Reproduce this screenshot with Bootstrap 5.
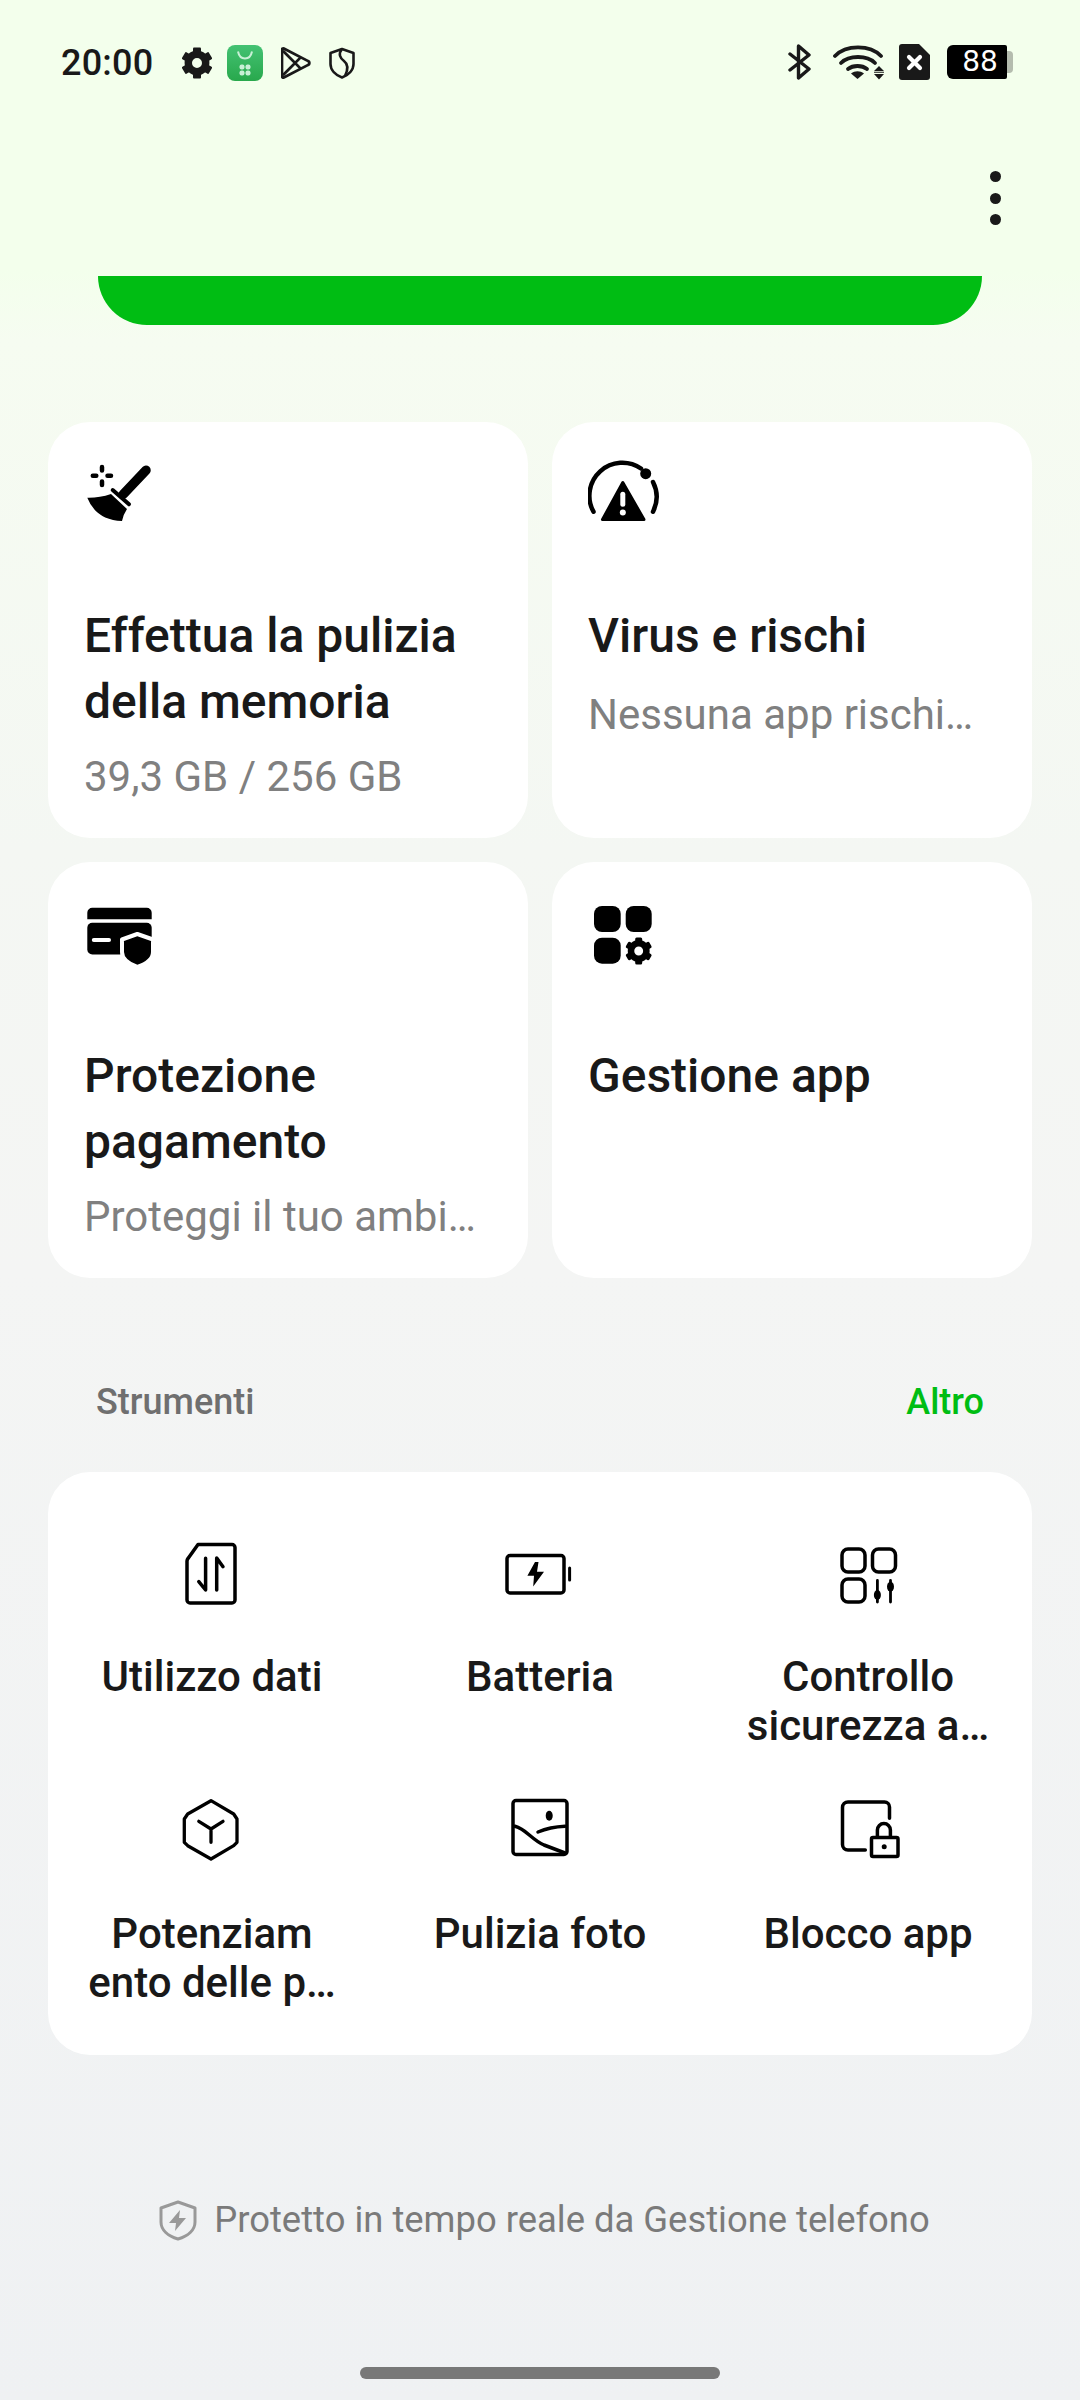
<!doctype html>
<html lang="it"><head><meta charset="utf-8"><title>Gestione telefono</title>
<link href="https://cdn.jsdelivr.net/npm/bootstrap@5.3.0/dist/css/bootstrap.min.css" rel="stylesheet">
<style>
html,body{margin:0;height:2400px;overflow:hidden}
body{font-family:Roboto,"Liberation Sans",sans-serif;color:#191919;background:linear-gradient(180deg,#f3ffec 0,#f3ffec 270px,#f6fcf1 340px,#f4f7f3 850px,#f4f5f4 1270px,#eff1f3 100%)}
.page-shell{height:2400px}
.status-strip{height:90px;padding:44px 67px 0 61px}
.clock{font-size:36px;font-weight:500;line-height:38px;width:121px;letter-spacing:.2px}
.status-strip svg{display:block}
.gap-gear{margin-right:15px}
.gap-store{margin-right:18px}
.gap-bt{margin-right:21px}
.gap-wifi{margin-right:13px}
.gap-sim{margin-right:17px}
.batt-wrap{height:34px}
.batt-body{width:60px;height:34px;background:#000;border-radius:6px 2px 2px 6px;font-size:28px;font-weight:500;padding-left:6px;font-family:"DejaVu Sans",sans-serif}
.batt-nub{width:6px;height:22px;margin-top:6px;background:#b4bcae;border-radius:0 4px 4px 0}
.menu-row{height:186px;padding:81px 78px 0 0}
.kebab{width:12px;height:54px}
.kebab i{display:block;width:11px;height:11px;border-radius:50%;background:#191919}
.hero-bar{height:49px;margin:0 98px;background:#00bd13;border-radius:0 0 62px 62px;flex:none}
.tiles{padding:97px 48px 0}
.tile{height:416px;border:0;border-radius:42px;padding:35px 36px 0;background:#fff}
.tile svg,.tool svg{display:block;flex:none}
.tile-title{font-size:48px;font-weight:500;line-height:66px;margin-top:74px;color:#191919;letter-spacing:0}
.tile-sub{font-size:42px;line-height:50px;margin-top:17px;color:#808080;white-space:nowrap}
.tile-sub-solo{margin-top:21px}
.tools-head{padding:0 96px;height:66px;margin-top:91px;margin-bottom:37px}
.tools-name{font-size:36px;font-weight:500;color:#6f6f6f}
.tools-more{font-size:36px;font-weight:500;color:#00bd13}
.tools-card{margin:0 48px;height:583px;border:0;border-radius:42px;background:#fff;padding:65px 0 0;display:grid;grid-template-columns:repeat(3,1fr);grid-auto-rows:213px;row-gap:44px}
.tool{align-items:center}
.tool-label{font-size:42px;font-weight:500;line-height:49px;margin-top:43px;text-align:center;color:#191919}
.foot-note{padding-top:143px;padding-left:9px;gap:17px;font-size:36.4px;line-height:44px;color:#7a7a7a}
.home-pill{width:360px;height:12px;border-radius:6px;background:#787878;position:absolute;left:360px;top:2367px}
</style></head><body>
<div class="page-shell d-flex flex-column">
 <div class="status-strip d-flex align-items-start justify-content-between">
  <div class="d-flex align-items-center">
   <div class="clock">20:00</div>
   <div class="d-flex align-items-center">
    <svg class="gap-gear" width="30" height="36" viewBox="-15 -18 30 36" fill="#191919"><circle r="8.700" fill="none" stroke="#191919" stroke-width="7.400"/><g><rect x="-4" y="-15.500" width="8" height="7" rx="1"/><rect x="-4" y="-15.500" width="8" height="7" rx="1" transform="rotate(60)"/><rect x="-4" y="-15.500" width="8" height="7" rx="1" transform="rotate(120)"/><rect x="-4" y="-15.500" width="8" height="7" rx="1" transform="rotate(180)"/><rect x="-4" y="-15.500" width="8" height="7" rx="1" transform="rotate(240)"/><rect x="-4" y="-15.500" width="8" height="7" rx="1" transform="rotate(300)"/></g></svg>
    <svg class="gap-store" width="36" height="36" viewBox="0 0 36 36"><defs><linearGradient id="sg" x1="0" y1="0" x2="0" y2="1"><stop offset="0" stop-color="#44c273"/><stop offset="1" stop-color="#28a84c"/></linearGradient></defs><rect width="36" height="36" rx="8" fill="url(#sg)"/><path d="M11 6.500c1 5 3.500 7 7 7s6-2 7-7" fill="none" stroke="#c8f0d6" stroke-width="2"/><g fill="#c8f0d6"><rect x="12.500" y="19.500" width="5" height="5" rx="2"/><rect x="18.500" y="19.500" width="5" height="5" rx="2"/><rect x="12.500" y="25.500" width="5" height="5" rx="2"/><rect x="18.500" y="25.500" width="5" height="5" rx="2"/></g></svg>
    <svg class="gap-store" width="30" height="36" viewBox="0 0 32 36" fill="none" stroke="#191919" stroke-width="3" stroke-linejoin="round"><path d="M3 2.500 29 16a2.200 2.200 0 0 1 0 4L3 33.500a1.500 1.500 0 0 1-2-1.500V4a1.500 1.500 0 0 1 2-1.500z"/><path d="M2 5 21 24M2 31 21 12"/></svg>
    <svg width="26" height="32" viewBox="0 0 26 32" fill="none" stroke="#191919" stroke-width="2.600" stroke-linejoin="round"><path d="M13 2 24.500 6V17c0 6-5 11-11.500 13.500C6.500 28 1.500 23 1.500 17V6z"/><path d="M13 2c-4 5-2 9 2 12 4 3 5 7 1 15"/></svg>
   </div>
  </div>
  <div class="d-flex align-items-center">
   <svg class="gap-bt" width="24" height="36" viewBox="0 0 24 36" fill="none" stroke="#191919" stroke-width="3.400" stroke-linecap="round" stroke-linejoin="round"><path d="M2 10 21 25 10.500 34V2L21 11 2 26"/></svg>
   <svg class="gap-wifi" width="53" height="36" viewBox="0 0 53 36" fill="none" stroke="#191919" stroke-width="3.800" stroke-linecap="round"><path d="M2 12C13 .5 37 .5 48 12"/><path d="M8 19c8-8 26-8 34 0"/><path d="M15 25c5-4 14-4 19 0"/><path fill="#191919" stroke="none" d="M24.500 35 18 29.500c4-3 9-3 13 0z"/><path fill="#191919" stroke="none" d="M46 22l-5 5h10zM41 30h10l-5 5.500zM41 27.800h10v1h-10z"/></svg>
   <svg class="gap-sim" width="31" height="36" viewBox="0 0 31 36"><path fill="#191919" d="M3 0H20L31 11V33a3 3 0 0 1-3 3H3a3 3 0 0 1-3-3V3a3 3 0 0 1 3-3z"/><path d="M10 13 21 24M21 13 10 24" stroke="#fff" stroke-width="4.200" stroke-linecap="round"/></svg>
   <div class="batt-wrap d-flex">
    <div class="batt-body d-flex align-items-center justify-content-center text-white">88</div>
    <div class="batt-nub"></div>
   </div>
  </div>
 </div>
 <div class="menu-row d-flex justify-content-end flex-shrink-0">
  <div class="kebab d-flex flex-column justify-content-between"><i></i><i></i><i></i></div>
 </div>
 <div class="hero-bar"></div>
 <div class="tiles">
  <div class="row row-cols-2 g-4">
   <div class="col"><div class="card tile">
    <svg width="72" height="72" viewBox="0 0 72 72"><path d="M62 13.300 39.300 37.300" stroke="#000" stroke-width="9.500" stroke-linecap="round"/><path d="M28.700 33 45 47.300" stroke="#000" stroke-width="4" stroke-linecap="round"/><path d="M3.300 40.700Q15 41 27 37L43 52Q39 58 38 64 12 63 3.300 40.700z"/><path d="M18 10v3.500M18 24.500V28M8.800 18.700h3.500M23.500 18.700H27" stroke="#000" stroke-width="4.500" stroke-linecap="round"/></svg>
    <div class="tile-title">Effettua la pulizia della memoria</div><div class="tile-sub">39,3 GB / 256 GB</div></div></div>
   <div class="col"><div class="card tile">
    <svg width="72" height="72" viewBox="0 0 72 72" fill="none"><path d="M5.500 54.700A33 33 0 0 1 53 11.500" stroke="#000" stroke-width="4.500" stroke-linecap="round"/><path d="M65 25A33 33 0 0 1 65 54.700" stroke="#000" stroke-width="4.500" stroke-linecap="round"/><circle cx="57.700" cy="16.700" r="5.500" fill="#000"/><path fill="#000" stroke="#000" stroke-width="3" stroke-linejoin="round" d="M34.800 25.500 14.500 62.500H56z"/><path d="M34.800 37.300v10" stroke="#fff" stroke-width="5" stroke-linecap="round"/><circle cx="34.800" cy="55.500" r="3" fill="#fff"/></svg>
    <div class="tile-title">Virus e rischi</div><div class="tile-sub tile-sub-solo">Nessuna app rischi…</div></div></div>
   <div class="col"><div class="card tile">
    <svg width="72" height="72" viewBox="0 0 72 72"><path d="M3.300 22.300V15.700a5 5 0 0 1 5-5H62.700a5 5 0 0 1 5 5v6.600z"/><rect x="3.300" y="25.700" width="64.400" height="31.700" rx="5"/><path d="M9.800 43H25" stroke="#fff" stroke-width="4" stroke-linecap="round"/><path fill="#000" stroke="#fff" stroke-width="4" stroke-linejoin="round" d="M53.300 37 69 42.500V55c0 7-7 12-15.700 15C45 67 38 62 38 55V42.500z"/></svg>
    <div class="tile-title">Protezione pagamento</div><div class="tile-sub">Proteggi il tuo ambi…</div></div></div>
   <div class="col"><div class="card tile">
    <svg width="72" height="72" viewBox="0 0 72 72"><rect x="6" y="9" width="26.700" height="26" rx="8"/><rect x="37.700" y="9" width="26" height="26" rx="8"/><rect x="6" y="40.700" width="26.700" height="26" rx="8"/><g transform="translate(50.700 54)"><circle r="7.700" fill="none" stroke="#000" stroke-width="6.500"/><rect x="-3.500" y="-13.500" width="7" height="6" rx="1.500"/><rect x="-3.500" y="-13.500" width="7" height="6" rx="1.500" transform="rotate(60)"/><rect x="-3.500" y="-13.500" width="7" height="6" rx="1.500" transform="rotate(120)"/><rect x="-3.500" y="-13.500" width="7" height="6" rx="1.500" transform="rotate(180)"/><rect x="-3.500" y="-13.500" width="7" height="6" rx="1.500" transform="rotate(240)"/><rect x="-3.500" y="-13.500" width="7" height="6" rx="1.500" transform="rotate(300)"/></g></svg>
    <div class="tile-title">Gestione app</div></div></div>
  </div>
 </div>
 <div class="tools-head d-flex justify-content-between align-items-center">
  <div class="tools-name">Strumenti</div><div class="tools-more">Altro</div>
 </div>
 <div class="card tools-card">
  <div class="tool d-flex flex-column"><svg width="72" height="72" viewBox="0 0 72 72" fill="none" stroke="#000" stroke-width="3.500" stroke-linecap="round" stroke-linejoin="round"><path d="M22 7.500H56a3 3 0 0 1 3 3V63a3 3 0 0 1-3 3H14a3 3 0 0 1-3-3V24a4 4 0 0 1 1-2.500z"/><path d="M29.600 21.300V53L22.800 44.700M40.700 53V21L47 29.700"/></svg><div class="tool-label">Utilizzo dati</div></div>
  <div class="tool d-flex flex-column"><svg width="72" height="72" viewBox="0 0 72 72" fill="none" stroke="#000" stroke-width="3.500" stroke-linecap="round" stroke-linejoin="round"><rect x="3" y="18.500" width="57" height="37.500" rx="3"/><path d="M65.600 31v12" stroke-width="3"/><path fill="#000" stroke="none" d="M31 25 23.400 38.700H30L29.200 49.500 40 34.700H33L34.500 25z"/></svg><div class="tool-label">Batteria</div></div>
  <div class="tool d-flex flex-column"><svg width="72" height="72" viewBox="0 0 72 72" fill="none" stroke="#000" stroke-width="3.500" stroke-linecap="round"><rect x="10" y="12" width="23" height="23" rx="6"/><rect x="40.500" y="12" width="23" height="23" rx="6"/><rect x="10" y="42" width="23" height="23" rx="6"/><path d="M45.400 43.500V65M58.500 43.500V65" stroke-width="2.800"/><ellipse cx="45.400" cy="58" rx="3.500" ry="5" fill="#000" stroke="none"/><ellipse cx="58.500" cy="49.700" rx="3.500" ry="5" fill="#000" stroke="none"/></svg><div class="tool-label">Controllo<br>sicurezza a…</div></div>
  <div class="tool d-flex flex-column"><svg width="72" height="72" viewBox="0 0 72 72" fill="none" stroke="#000" stroke-width="3.300" stroke-linecap="round" stroke-linejoin="round"><path d="M35 6.700 57.700 20 61 25V48.300L57.700 51.700 35 65 11.700 51.700 8.300 48.300V25L11.700 20z"/><path d="M35 48.300V35L22.800 27.300M35 35 47 27.300"/></svg><div class="tool-label">Potenziam<br>ento delle p…</div></div>
  <div class="tool d-flex flex-column"><svg width="72" height="72" viewBox="0 0 72 72" fill="none" stroke="#000" stroke-width="3.500" stroke-linecap="round" stroke-linejoin="round"><rect x="9" y="6.500" width="54" height="54" rx="3"/><ellipse cx="45.200" cy="21.700" rx="3.500" ry="5" fill="#000" stroke="none"/><path d="M11 32.300C22 35 28 46 40 51L61 59M34 38Q46 33 61 32.300"/></svg><div class="tool-label">Pulizia foto</div></div>
  <div class="tool d-flex flex-column"><svg width="72" height="72" viewBox="0 0 72 72" fill="none" stroke="#000" stroke-width="3.500" stroke-linecap="round" stroke-linejoin="round"><path d="M57.500 24.300V13a5 5 0 0 0-5-5H16a5.500 5.500 0 0 0-5.500 5.500V50.500A5.500 5.500 0 0 0 16 56H33.300"/><rect x="39.500" y="43.500" width="26.500" height="19" rx="1.500"/><path d="M45.400 43V36a6.500 6.500 0 0 1 13 0v7"/><circle cx="52.200" cy="52.700" r="2.500" fill="#000" stroke="none"/></svg><div class="tool-label">Blocco app</div></div>
 </div>
 <div class="foot-note d-flex justify-content-center align-items-center">
  <svg width="38" height="41" viewBox="0 0 38 41" fill="none"><path d="M19 2 36 8V22c0 8-7 14-17 17C9 36 2 30 2 22V8z" stroke="#999" stroke-width="3" stroke-linejoin="round"/><path fill="#999" d="M21 10 10 23H17L16 31 27 18H20z"/></svg>
  <span>Protetto in tempo reale da Gestione telefono</span>
 </div>
 <div class="home-pill"></div>
</div>
</body></html>
